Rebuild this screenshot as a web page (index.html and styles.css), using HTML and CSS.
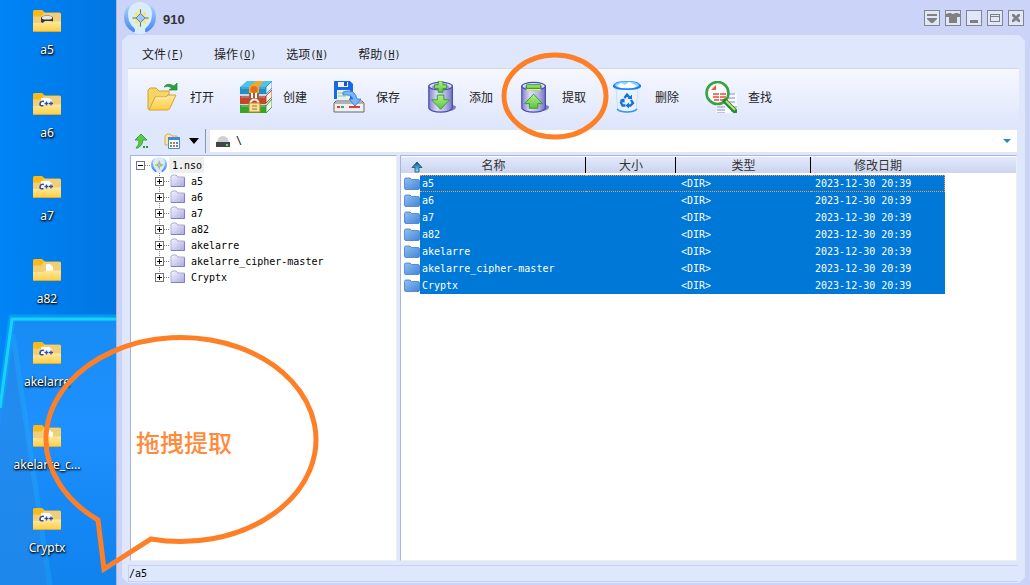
FILE: index.html
```html
<!DOCTYPE html>
<html lang="zh-CN">
<head>
<meta charset="utf-8">
<meta name="viewport" content="width=device-width, initial-scale=1">
<title>910</title>
<link rel="stylesheet" href="styles.css">
</head>
<body>
<svg class="defs" aria-hidden="true">
  <defs>
    <linearGradient id="gYellow" x1="0" y1="0" x2="0" y2="1"><stop offset="0" stop-color="#ffe9a0"/><stop offset="1" stop-color="#ffcd3f"/></linearGradient>
    <linearGradient id="gLilac" x1="0" y1="0" x2="1" y2="1"><stop offset="0" stop-color="#f6f6ff"/><stop offset="1" stop-color="#aaaae0"/></linearGradient>
    <linearGradient id="gBlue" x1="0" y1="0" x2="1" y2="1"><stop offset="0" stop-color="#8fc0f0"/><stop offset="1" stop-color="#4584d6"/></linearGradient>
    <linearGradient id="gDrum" x1="0" y1="0" x2="1" y2="0"><stop offset="0" stop-color="#8080c8"/><stop offset=".35" stop-color="#dcdcf8"/><stop offset=".7" stop-color="#b4b4e4"/><stop offset="1" stop-color="#7474bc"/></linearGradient>
    <linearGradient id="gGreen" x1="0" y1="0" x2="0" y2="1"><stop offset="0" stop-color="#b6f08c"/><stop offset="1" stop-color="#5cc43c"/></linearGradient>
    <linearGradient id="gWing" x1="0" y1="0" x2="0" y2="1"><stop offset="0" stop-color="#b4d8fc"/><stop offset="1" stop-color="#3f86f4"/></linearGradient>
    <linearGradient id="gSort" x1="0" y1="0" x2="0" y2="1"><stop offset="0" stop-color="#1d4a78"/><stop offset=".5" stop-color="#2f9fd8"/><stop offset="1" stop-color="#8ceaff"/></linearGradient>
    <symbol id="deskFolder" viewBox="0 0 28 22">
      <path d="M0 1.500Q0 0 1.500 0H9L12 2.500H26.500Q28 2.500 28 4V12H0Z" fill="#fbb917"/>
      <path d="M0 6.500H8L11 3H26.500Q28 3 28 4.500V14H0Z" fill="#f0cf78"/>
    </symbol>
    <symbol id="deskFront" viewBox="0 0 28 22">
      <path d="M0 13H10L12.500 11.500H28V20.500Q28 22 26.500 22H1.500Q0 22 0 20.500Z" fill="url(#gYellow)"/>
      <path d="M0 21.500H28" stroke="#e0a92f"/>
    </symbol>
    <symbol id="cppFolder" viewBox="0 0 28 22">
      <use href="#deskFolder" width="28" height="22"/>
      <path d="M8 5H16L19 7.500V13H8Z" fill="#fff"/>
      <use href="#deskFront" width="28" height="22"/>
      <path d="M11 8.500Q7.500 7.500 7 11Q7 13.500 10.500 12.500" fill="none" stroke="#284fac" stroke-width="1.600"/>
      <path d="M11.500 10.500H15.500M13.500 8.500V12.500M16 10.500H20M18 8.500V12.500" stroke="#284fac" stroke-width="1.300"/>
    </symbol>
    <symbol id="driveFolder" viewBox="0 0 28 22">
      <use href="#deskFolder" width="28" height="22"/>
      <use href="#deskFront" width="28" height="22"/>
      <path d="M8 8Q8 5.500 14 5.500T20 8V11.500L18 11H12L9.500 13L8 12Z" fill="#34383e"/>
      <ellipse cx="14" cy="7.700" rx="5.300" ry="1.900" fill="#e8e8e8"/>
    </symbol>
    <symbol id="pageFolder" viewBox="0 0 28 22">
      <use href="#deskFolder" width="28" height="22"/>
      <path d="M13 5H17L20 8V13H13Z" fill="#fff"/>
      <use href="#deskFront" width="28" height="22"/>
    </symbol>
    <symbol id="logo" viewBox="0 0 32 32">
      <ellipse cx="16" cy="16" rx="14" ry="16" fill="#d9ecfd"/>
      <path d="M9 1Q0 5 0 15Q0 25 9 30Q11 31 11 28Q11 26 8 24Q4 19 4 12Q4 6 9 1ZM23 1Q32 5 32 15Q32 25 23 30Q21 31 21 28Q21 26 24 24Q28 19 28 12Q28 6 23 1Z" fill="url(#gWing)"/>
      <path d="M16.500 7V25M8 16H25M11.500 11L21.500 21M21.500 11L11.500 21" stroke="#ffe54a" stroke-width="2.600"/>
      <path d="M16.500 10L22.500 16L16.500 22L10.500 16Z" fill="#ffe54a"/>
      <path d="M16.500 7.500V24.500M8.500 16H24.500" stroke="#3e78e4"/>
      <path d="M16.500 11.500L21 16L16.500 20.500L12 16Z" fill="#9cc8ff" stroke="#4a86ea"/>
    </symbol>
    <symbol id="treeFolder" viewBox="0 0 16 14">
      <path d="M1 3Q1 1 3 1H6L8 3H14.500V12.500H1Z" fill="url(#gLilac)" stroke="#aaaade"/>
      <path d="M1 12.500H14.500V4" fill="none" stroke="#8080c4"/>
    </symbol>
    <symbol id="blueFolder" viewBox="0 0 16 14">
      <path d="M.5 2.500Q.5 1 2 1H6L7.500 2.500H14Q15.500 2.500 15.500 4V11Q15.500 12.500 14 12.500H2Q.5 12.500 .5 11Z" fill="url(#gBlue)" stroke="#3f7cd0" stroke-width=".8"/>
    </symbol>
    <symbol id="drum" viewBox="0 0 32 34">
      <path d="M25 24L31 27Q31 31 24 32Z" fill="#8080c8"/>
      <path d="M2 5V29Q5 33 14.500 33T27 29V5" fill="url(#gDrum)" stroke="#4a48b8" stroke-width="1.300"/>
      <ellipse cx="14.500" cy="5.500" rx="12.500" ry="4" fill="#e0e0f6" stroke="#4a48b8" stroke-width="1.300"/>
      <ellipse cx="14.500" cy="6.500" rx="9.500" ry="3" fill="#9c9cd4"/>
    </symbol>
  </defs>
</svg>

<main class="screen">
  <nav class="desktop" aria-label="桌面">
    <svg class="wallpaper" viewBox="0 0 116 585" preserveAspectRatio="none" aria-hidden="true">
      <defs>
        <linearGradient id="skyTop" x1="0" y1="0" x2="1" y2="0"><stop offset="0" stop-color="#0084f6"/><stop offset="1" stop-color="#0076e2"/></linearGradient>
        <linearGradient id="skyLow" x1="0" y1="0" x2="0" y2="1"><stop offset="0" stop-color="#168cf4"/><stop offset=".4" stop-color="#1f90ff"/><stop offset="1" stop-color="#0f82ee"/></linearGradient>
      </defs>
      <path d="M0 0H116V585H0Z" fill="url(#skyTop)"/>
      <path d="M12 319H116V585H0V410Z" fill="url(#skyLow)"/>
      <path d="M13 330L0 430V585H48Z" fill="#2389ea" opacity=".7"/>
      <path d="M13 335L50 585" stroke="#22b0ff" stroke-width="5" opacity=".35"/>
      <path d="M116 318H12L0 408" fill="none" stroke="#05aaf8" stroke-width="7" opacity=".7"/>
      <path d="M116 319H12L0 408" fill="none" stroke="#22dcff" stroke-width="3" opacity=".8"/>
    </svg>
    <a class="shortcut" href="#a5"><svg><use href="#driveFolder"/></svg><span>a5</span></a>
    <a class="shortcut" href="#a6"><svg><use href="#cppFolder"/></svg><span>a6</span></a>
    <a class="shortcut" href="#a7"><svg><use href="#cppFolder"/></svg><span>a7</span></a>
    <a class="shortcut" href="#a82"><svg><use href="#pageFolder"/></svg><span>a82</span></a>
    <a class="shortcut" href="#akelarre"><svg><use href="#cppFolder"/></svg><span>akelarre</span></a>
    <a class="shortcut" href="#cipher"><svg><use href="#pageFolder"/></svg><span>akelarre_c...</span></a>
    <a class="shortcut" href="#cryptx"><svg><use href="#cppFolder"/></svg><span>Cryptx</span></a>
  </nav>

  <section class="window">
    <header class="titlebar">
      <svg class="logo" aria-hidden="true"><use href="#logo"/></svg>
      <h1>910</h1>
      <div class="window-buttons">
        <button type="button" aria-label="菜单"><svg viewBox="0 0 16 16"><path d="M3 4H13V6H3ZM3 8H13V9L9 13H7L3 9Z"/></svg></button>
        <button type="button" aria-label="皮肤"><svg viewBox="0 0 16 16"><path d="M1 4L4 3H6Q8 5 10 3H12L15 4V7H12V13H4V7H1Z"/></svg></button>
        <button type="button" aria-label="最小化"><svg viewBox="0 0 16 16"><path d="M4 10H12V13H4Z"/></svg></button>
        <button type="button" aria-label="最大化"><svg viewBox="0 0 16 16"><path d="M3 4H13V12H3ZM4 5V6H12V5ZM4 7V11H12V7Z" fill-rule="evenodd"/></svg></button>
        <button type="button" aria-label="关闭"><svg viewBox="0 0 16 16"><path d="M4 4H6L8 6L10 4H12V6L10 8L12 10V12H10L8 10L6 12H4V10L6 8L4 6Z"/></svg></button>
      </div>
    </header>

    <div class="panel">
      <nav class="menubar">
        <button type="button">文件<span class="key">(<u>F</u>)</span></button>
        <button type="button">操作<span class="key">(<u>O</u>)</span></button>
        <button type="button">选项<span class="key">(<u>N</u>)</span></button>
        <button type="button">帮助<span class="key">(<u>H</u>)</span></button>
      </nav>

      <div class="toolbar">
        <button type="button">
          <svg viewBox="0 0 32 32"><path d="M1 28V9L3 7H9L12 10H22V28Z" fill="#f7d564" stroke="#cda136"/><path d="M2 29L8 16H19L21 14H29L23 27Q22 29 20 29Z" fill="url(#gYellow)" stroke="#d1a439"/><path d="M9 17H20" stroke="#fff6ca"/><path d="M17 6Q20 1 27 5L30 2V9H22L25 7Q21 4 17 6Z" fill="#2da13a" stroke="#1d8530" stroke-width=".7"/></svg>
          <span>打开</span></button>
        <button type="button">
          <svg viewBox="0 0 32 32"><path d="M0 6L7 0H32V26L25 32H0Z" fill="#c8d8e8"/><path d="M0 6L7 0H32L26 6Z" fill="#4cc3ea"/><path d="M0 6H26V13H0Z" fill="#2190c8"/><path d="M0 15H26V23H0Z" fill="#c9442a"/><path d="M0 24H26V32H0Z" fill="#37a426"/><path d="M26 6L32 0V7L26 13Z" fill="#e8f4ff" stroke="#2a87bb" stroke-width=".8"/><path d="M26 15L32 9V16L26 22Z" fill="#f5efe8" stroke="#b83925" stroke-width=".8"/><path d="M26 25L32 18V26L26 32Z" fill="#f0f5e5" stroke="#2c942a" stroke-width=".8"/><path d="M1 7H25M1 16H25M1 25H25" stroke="#8ce0e8" opacity=".6"/><path d="M9 6L16 0H24L19 6V12H9Z" fill="#f0a82e"/><circle cx="14" cy="8.500" r="3.500" fill="#e56d17"/><path d="M9 12H19V18H9Z" fill="#a35b3a"/><path d="M12 12V17M16 12V17" stroke="#fff" stroke-width="2"/><path d="M10.500 23Q10.500 18.500 14.500 18.500T18.500 23" fill="none" stroke="#f8efd2" stroke-width="2"/><path d="M9 22H20V31H9Z" fill="#f7e49c" stroke="#b3862e"/><path d="M12 25H17M12 28H17" stroke="#9a6b24"/></svg>
          <span>创建</span></button>
        <button type="button">
          <svg viewBox="0 0 32 32"><path d="M1 0H17L20 3V18H1Z" fill="#1b68e4"/><path d="M5 1H15V6H5Z" fill="#eef4ff"/><path d="M11 1H14V5H11Z" fill="#1759bf"/><path d="M4 9H17V18H4Z" fill="#e5f4e4"/><path d="M5 12H15M5 15H13" stroke="#8fc5b0"/><path d="M1 22L3 20H29L31 22V31H1Z" fill="#f0f0f2" stroke="#666"/><path d="M2 22H30" stroke="#777"/><path d="M4 26H7" stroke="#e04030" stroke-width="2"/><path d="M8 26H11" stroke="#3a9c8c" stroke-width="2"/><path d="M16 26H27" stroke="#e04030" stroke-width="2"/><path d="M10 11Q22 7 24 18H28L22 25L16 18H20Q18 13 10 14Z" fill="#79b5fa" stroke="#2f76d9" stroke-width=".8"/></svg>
          <span>保存</span></button>
        <button type="button">
          <svg viewBox="0 0 32 34"><use href="#drum" width="32" height="34"/><path d="M12 0H17V4H21V8H17V12H12V8H8V4H12Z" fill="url(#gGreen)" stroke="#2e9d2e"/><path d="M11 15H18V20H24L14.500 30L5 20H11Z" fill="url(#gGreen)" stroke="#2e9d2e"/></svg>
          <span>添加</span></button>
        <button type="button">
          <svg viewBox="0 0 32 34"><use href="#drum" width="32" height="34"/><path d="M7 8H22V10H7Z" fill="#f3ee6c"/><path d="M7 4H22V8H7Z" fill="url(#gGreen)" stroke="#2e9d2e"/><path d="M14.500 14L24 24H19V29H10V24H5Z" fill="url(#gGreen)" stroke="#2e9d2e"/></svg>
          <span>提取</span></button>
        <button type="button">
          <svg viewBox="0 0 32 32"><path d="M4 8H26L24 30Q15 33 6 30Z" fill="#e7f2fc" stroke="#bed7f2" stroke-width=".7"/><path d="M1 4L5 1Q15-1 25 1L29 4V6Q27 9 15 9T1 6Z" fill="#1980ee"/><ellipse cx="15" cy="4" rx="12" ry="3.600" fill="#8fd4ff"/><path d="M5 5L9 2L13 4L17 1L21 3L25 5L21 7H9Z" fill="#fff"/><path d="M5 28Q8 31 15 31T25 28" fill="none" stroke="#3199ee" stroke-width="1.600"/><path d="M12.500 17L15 13.500L18 17M19 19L21 22L18.500 24.500H16M13.500 24.500H10.500L9 21.500L11 18.500" fill="none" stroke="#1670e4" stroke-width="2.300"/><path d="M15.500 18H20V13.500ZM17 21.500V27.500L13.500 24.500ZM7.500 19L12.500 17.500L12.500 22Z" fill="#1670e4"/></svg>
          <span>删除</span></button>
        <button type="button">
          <svg viewBox="0 0 32 32"><path d="M11 12H32V32H11Z" fill="#f9faff"/><path d="M20 13H30M21 17H30M22 21H30M12 26H20M12 29H20M12 32H20M27 26H32M26 30H32" stroke="#acb0df" stroke-width="1.500"/><circle cx="12.500" cy="12" r="11" fill="#fff" stroke="#38a345" stroke-width="2.600"/><path d="M6 9L11 4V9Z" fill="#e95a4c"/><path d="M8 13H14M15 13H21M8 16H14M15 16H21M9 19H14M15 19H20" stroke="#f4746a" stroke-width="2"/><path d="M20 20L30 30" stroke="#28872f" stroke-width="5" stroke-linecap="round"/><path d="M21 20L30 29" stroke="#b6e570" stroke-width="2"/></svg>
          <span>查找</span></button>
      </div>

      <div class="location">
        <button class="up" type="button" aria-label="上一级"><svg viewBox="0 0 16 16"><path d="M7 1L13 7H9Q9 12 4 15H2Q6 11 5 7H1Z" fill="#5dca45" stroke="#35a734"/><path d="M9 14H11M12 14H14" stroke="#279a32" stroke-width="2"/></svg></button>
        <button class="view" type="button" aria-label="视图">
          <svg viewBox="0 0 16 16"><path d="M1 12V3L3 1H6L8 3H13V12Z" fill="#ffe3a0" stroke="#d8ad5d"/><path d="M4.500 4.500H15.500V15.500H4.500Z" fill="#fff" stroke="#4c88cb"/><path d="M4 5.500H16" stroke="#3c8be2" stroke-width="3"/><path d="M6 10H8M6 13H8" stroke="#56ac5a" stroke-width="2"/><path d="M9 10H11M9 13H11" stroke="#e66655" stroke-width="2"/><path d="M12 10H14M12 13H14" stroke="#5681dd" stroke-width="2"/></svg>
          <svg class="caret" viewBox="0 0 10 6"><path d="M0 0H10L5 6Z" fill="#000"/></svg>
        </button>
        <div class="address">
          <svg viewBox="0 0 14 11"><path d="M1 6Q2 0 7 0T13 6Z" fill="#cfd0d2"/><path d="M0 6H14V11H0Z" fill="#42464a"/><path d="M10 8H12V10H10Z" fill="#61ed54"/></svg>
          <input type="text" value="\" aria-label="路径">
          <button type="button" aria-label="展开"><svg viewBox="0 0 8 4"><path d="M0 0H8L4 4Z" fill="#2490b8"/></svg></button>
        </div>
      </div>

      <div class="panes">
        <div class="tree">
          <div class="node root"><button class="toggle" type="button" aria-label="折叠"></button><i></i><svg><use href="#logo"/></svg><span>1.nso</span></div>
          <ul>
            <li class="node"><button class="toggle plus" type="button" aria-label="展开 a5"></button><i></i><svg><use href="#treeFolder"/></svg><span>a5</span></li>
            <li class="node"><button class="toggle plus" type="button" aria-label="展开 a6"></button><i></i><svg><use href="#treeFolder"/></svg><span>a6</span></li>
            <li class="node"><button class="toggle plus" type="button" aria-label="展开 a7"></button><i></i><svg><use href="#treeFolder"/></svg><span>a7</span></li>
            <li class="node"><button class="toggle plus" type="button" aria-label="展开 a82"></button><i></i><svg><use href="#treeFolder"/></svg><span>a82</span></li>
            <li class="node"><button class="toggle plus" type="button" aria-label="展开 akelarre"></button><i></i><svg><use href="#treeFolder"/></svg><span>akelarre</span></li>
            <li class="node"><button class="toggle plus" type="button" aria-label="展开 akelarre_cipher-master"></button><i></i><svg><use href="#treeFolder"/></svg><span>akelarre_cipher-master</span></li>
            <li class="node"><button class="toggle plus" type="button" aria-label="展开 Cryptx"></button><i></i><svg><use href="#treeFolder"/></svg><span>Cryptx</span></li>
          </ul>
        </div>

        <div class="files">
          <table>
            <colgroup><col class="c-icon"><col class="c-name"><col class="c-size"><col class="c-type"><col class="c-date"><col></colgroup>
            <thead>
              <tr><th colspan="2"><div class="sorted"><svg viewBox="0 0 12 12"><path d="M6 1L11 6.500H8V11H4V6.500H1Z" fill="url(#gSort)" stroke="#2b4560" stroke-width=".8"/></svg><span>名称</span></div></th><th>大小</th><th>类型</th><th class="open">修改日期</th><th class="open"></th></tr>
            </thead>
            <tbody>
              <tr class="focused"><td class="icon"><svg><use href="#blueFolder"/></svg></td><td>a5</td><td></td><td>&lt;DIR&gt;</td><td>2023-12-30 20:39</td><td class="rest"></td></tr>
              <tr><td class="icon"><svg><use href="#blueFolder"/></svg></td><td>a6</td><td></td><td>&lt;DIR&gt;</td><td>2023-12-30 20:39</td><td class="rest"></td></tr>
              <tr><td class="icon"><svg><use href="#blueFolder"/></svg></td><td>a7</td><td></td><td>&lt;DIR&gt;</td><td>2023-12-30 20:39</td><td class="rest"></td></tr>
              <tr><td class="icon"><svg><use href="#blueFolder"/></svg></td><td>a82</td><td></td><td>&lt;DIR&gt;</td><td>2023-12-30 20:39</td><td class="rest"></td></tr>
              <tr><td class="icon"><svg><use href="#blueFolder"/></svg></td><td>akelarre</td><td></td><td>&lt;DIR&gt;</td><td>2023-12-30 20:39</td><td class="rest"></td></tr>
              <tr><td class="icon"><svg><use href="#blueFolder"/></svg></td><td>akelarre_cipher-master</td><td></td><td>&lt;DIR&gt;</td><td>2023-12-30 20:39</td><td class="rest"></td></tr>
              <tr><td class="icon"><svg><use href="#blueFolder"/></svg></td><td>Cryptx</td><td></td><td>&lt;DIR&gt;</td><td>2023-12-30 20:39</td><td class="rest"></td></tr>
            </tbody>
          </table>
        </div>
      </div>

      <footer class="status">/a5</footer>
    </div>
  </section>

  <svg class="ring" viewBox="0 0 108 90" aria-hidden="true"><ellipse cx="54" cy="45" rx="51" ry="41"/></svg>
  <div class="callout">
    <svg viewBox="0 0 276 240" aria-hidden="true"><path d="M57 188L63 237L110 207A135 102 0 1 0 57 188Z"/></svg>
    <p>拖拽提取</p>
  </div>
</main>
</body>
</html>
```
FILE: styles.css
```css
* {
  box-sizing: border-box;
}

body {
  margin: 0;
  font-family: "DejaVu Sans Mono", "Noto Sans CJK SC", monospace;
  font-size: 10px;
  line-height: 16px;
  color: #000;
}

svg {
  display: block;
  flex: none;
}

button {
  margin: 0;
  padding: 0;
  border: 0;
  background: none;
  color: inherit;
  font: inherit;
}

.defs {
  position: absolute;
  width: 0;
  height: 0;
}

.screen {
  position: relative;
  display: flex;
  min-height: 100vh;
  overflow: hidden;
}

/* Desktop strip */
.desktop {
  position: relative;
  display: flex;
  flex: none;
  flex-direction: column;
  width: 116px;
  background: #007ff0;
}

.wallpaper {
  position: absolute;
  inset: 0;
  width: 100%;
  height: 100%;
}

.shortcut {
  position: relative;
  display: flex;
  flex-direction: column;
  align-items: center;
  gap: 9px;
  width: 94px;
  height: 83px;
  padding-top: 10px;
  color: #fff;
  font-family: "Noto Sans", sans-serif;
  font-size: 12px;
  line-height: 17px;
  text-decoration: none;
  text-shadow: 1px 1px 2px #000, 0 1px 2px #000;
}

.shortcut svg {
  width: 28px;
  height: 22px;
}

.shortcut:last-child {
  height: auto;
}

/* Application window */
.window {
  display: flex;
  flex: 1;
  flex-direction: column;
  min-width: 0;
  padding: 0 5px 2px;
  border-left: 1px solid #b4b6c6;
  background: #ccd3f8;
}

.titlebar {
  display: flex;
  align-items: center;
  gap: 7px;
  height: 35px;
  padding: 0 1px 0 2px;
}

.logo {
  width: 32px;
  height: 32px;
}

.titlebar h1 {
  margin: 0;
  padding-top: 4px;
  color: #333;
  font-family: "Liberation Sans", sans-serif;
  font-size: 13px;
}

.window-buttons {
  display: flex;
  gap: 5px;
  margin-left: auto;
}

.window-buttons button {
  width: 16px;
  height: 16px;
  background: #dfe7fc;
  outline: 1px solid #858585;
  outline-offset: -1px;
}

.window-buttons svg {
  width: 16px;
  height: 16px;
  fill: #808080;
}

.panel {
  display: flex;
  flex: 1;
  flex-direction: column;
  padding: 0 6px 1px;
  background: #dfe7fc;
  clip-path: polygon(6px 0, calc(100% - 6px) 0, 100% 6px, 100% calc(100% - 6px), calc(100% - 6px) 100%, 6px 100%, 0 calc(100% - 6px), 0 6px);
}

.menubar {
  display: flex;
  gap: 30px;
  height: 33px;
  padding: 7px 14px 0;
  color: #222;
}

.menubar button,
.toolbar button {
  display: flex;
  align-items: center;
  font-size: 12px;
}

.key {
  font-size: 10px;
}

.toolbar {
  display: flex;
  height: 61px;
  padding: 0 19px 4px;
  border-top: 1px solid #d9d9dd;
  background: linear-gradient(#f6f8ff, #dde5fc);
  color: #222;
}

.toolbar button {
  gap: 11px;
  width: 93px;
}

.toolbar svg {
  width: 32px;
  height: 32px;
}

.toolbar span {
  padding-top: 2px;
}

.location {
  display: flex;
  height: 26px;
  padding-bottom: 2px;
}

.up,
.view {
  display: flex;
  align-items: center;
}

.up {
  padding: 0 14px 0 6px;
}

.up svg,
.view svg {
  width: 16px;
  height: 16px;
}

.view {
  gap: 9px;
  padding-right: 6px;
  border-right: 1px solid #8c94a8;
}

.view .caret {
  width: 10px;
  height: 6px;
}

.address {
  display: flex;
  flex: 1;
  align-items: center;
  gap: 6px;
  margin-left: 3px;
  margin-right: 1px;
  padding: 0 6px;
  border: 1px solid #e6e6e6;
  background: #fff;
}

.address > svg {
  width: 14px;
  height: 11px;
}

.address input {
  flex: 1;
  min-width: 0;
  padding: 0;
  border: 0;
  background: none;
  font: inherit;
}

.address button svg {
  width: 8px;
  height: 4px;
}

/* Tree and file list */
.panes {
  display: grid;
  flex: 1;
  grid-template-columns: 267px 1fr;
  gap: 3px;
  padding: 0 2px;
}

.tree,
.files {
  min-width: 0;
  border: 1px solid #a6b4e0;
  border-right-color: #eee;
  border-bottom-color: #eee;
  background: #fff;
}

.tree {
  padding: 1px 0 0 5px;
}

.tree ul {
  margin: 0;
  padding: 0 0 0 19px;
  list-style: none;
}

.node {
  display: flex;
  align-items: center;
  height: 16px;
}

.node i {
  width: 5px;
  margin: 0 1px 0 0;
  border-top: 1px dotted #888;
}

.node svg {
  width: 16px;
  height: 14px;
}

.node span {
  padding-top: 1px;
  padding-left: 5px;
}

.root svg {
  height: 16px;
}

.root span {
  margin-left: 2px;
  padding: 1px 2px 0 3px;
  line-height: 15px;
  background: #efefef;
}

.tree li {
  background: repeating-linear-gradient(#888 0 1px, transparent 1px 2px) 4px 0 / 1px 100% no-repeat;
}

.tree li:last-child {
  background-size: 1px 50%;
}

.toggle {
  flex: none;
  width: 9px;
  height: 9px;
  border: 1px solid #777;
  background: linear-gradient(#000, #000) center / 5px 1px no-repeat, #fff;
}

.plus {
  background: linear-gradient(#000, #000) center / 5px 1px no-repeat, linear-gradient(#000, #000) center / 1px 5px no-repeat, #fff;
}

.files table {
  width: 100%;
  border-spacing: 0;
  table-layout: fixed;
}

.c-icon {
  width: 19px;
}

.c-name {
  width: 166px;
}

.c-size {
  width: 90px;
}

.c-type {
  width: 135px;
}

.c-date {
  width: 134px;
}

.files th {
  height: 19px;
  padding: 2px 0 0;
  background:
    linear-gradient(#000, #000) right 1px / 1px 16px no-repeat,
    linear-gradient(#e2e9fd, #ccd4ee) 0 1px / 100% 16px no-repeat;
  color: #333;
  font-size: 12px;
  font-weight: normal;
  line-height: 17px;
}

.files .open {
  background: linear-gradient(#e2e9fd, #ccd4ee) 0 1px / 100% 16px no-repeat;
}

.sorted {
  display: grid;
  grid-template-columns: 12px 1fr 12px;
  align-items: center;
  padding: 0 10px;
}

.sorted svg {
  width: 12px;
  height: 12px;
}

.files td {
  height: 17px;
  padding: 0 0 0 2px;
  background: #0078d7;
  color: #fff;
  line-height: 15px;
  white-space: nowrap;
}

.files td:nth-child(4) {
  padding-left: 5px;
}

.files td:nth-child(5) {
  padding-left: 4px;
}

.files tbody .icon,
.files tbody .rest {
  padding: 0 0 0 3px;
  border: 0;
  background: none;
}

.icon svg {
  width: 16px;
  height: 14px;
}

.focused td {
  border: 1px dotted #ff9a3c;
  border-width: 1px 0;
}

.focused td:nth-child(5) {
  border-right-width: 1px;
}

.status {
  height: 17px;
  margin: 4px 1px 0 0;
  border: 1px solid #c8d2ee;
  border-right: 0;
}

/* Hand-drawn markup over the screen */
.ring,
.callout {
  position: absolute;
  pointer-events: none;
}

.ring {
  top: 51px;
  left: 501px;
  width: 108px;
  height: 90px;
}

.callout {
  top: 332px;
  left: 41px;
  width: 276px;
  height: 240px;
}

.ring,
.callout svg {
  overflow: visible;
}

.ring ellipse,
.callout path {
  fill: none;
  stroke: #ff7f27;
  stroke-width: 5;
}

.callout p {
  position: absolute;
  top: 95px;
  left: 95px;
  margin: 0;
  color: #ff8a3c;
  font-family: "Noto Sans CJK SC", sans-serif;
  font-size: 24px;
  font-weight: 500;
  line-height: 30px;
}
```
